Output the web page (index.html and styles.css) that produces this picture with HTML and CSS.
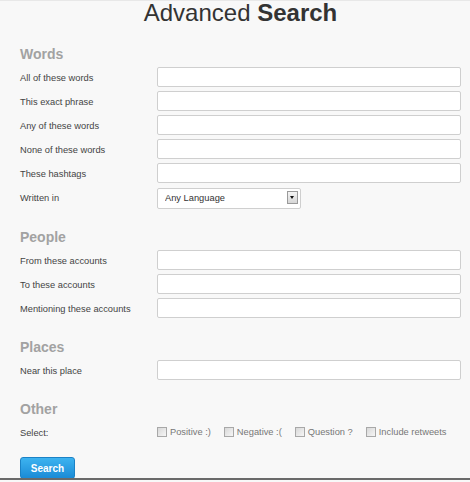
FILE: index.html
```html
<!DOCTYPE html>
<html lang="en">
<head>
    <meta charset="UTF-8">
    <meta name="viewport" content="width=device-width, initial-scale=1.0">
    <title>Advanced Search</title>
    <link rel="stylesheet" href="styles.css">
</head>
<body>
    <div class="page">
        <h1 class="title">Advanced <b>Search</b></h1>

        <section class="group">
            <h2>Words</h2>
            <div class="fields">
                <div class="row"><label>All of these words</label><input type="text"></div>
                <div class="row"><label>This exact phrase</label><input type="text"></div>
                <div class="row"><label>Any of these words</label><input type="text"></div>
                <div class="row"><label>None of these words</label><input type="text"></div>
                <div class="row"><label>These hashtags</label><input type="text"></div>
                <div class="row">
                    <label>Written in</label>
                    <div class="select">
                        <select><option>Any Language</option></select>
                        <span class="arrow"></span>
                    </div>
                </div>
            </div>
        </section>

        <section class="group">
            <h2>People</h2>
            <div class="fields">
                <div class="row"><label>From these accounts</label><input type="text"></div>
                <div class="row"><label>To these accounts</label><input type="text"></div>
                <div class="row"><label>Mentioning these accounts</label><input type="text"></div>
            </div>
        </section>

        <section class="group">
            <h2>Places</h2>
            <div class="fields">
                <div class="row"><label>Near this place</label><input type="text"></div>
            </div>
        </section>

        <section class="group">
            <h2>Other</h2>
            <div class="fields">
                <div class="row">
                    <label>Select:</label>
                    <div class="checks">
                        <label class="check"><input type="checkbox">Positive :)</label>
                        <label class="check"><input type="checkbox">Negative :(</label>
                        <label class="check"><input type="checkbox">Question ?</label>
                        <label class="check"><input type="checkbox">Include retweets</label>
                    </div>
                </div>
            </div>
        </section>

        <button class="search-btn">Search</button>
    </div>
</body>
</html>
```

FILE: styles.css
```css
body {
    margin: 0;
    padding: 0;
    font-family: 'Liberation Sans', Arial, sans-serif;
    background: #f8f8f8;
}
.page {
    height: 480px;
    box-sizing: border-box;
    padding: 0 9px 0 20px;
    background: #f8f8f8;
    border-top: 1px solid #e8e8e8;
    border-bottom: 2px solid #6a6a6a;
    overflow: hidden;
}
.title {
    margin: 0 0 20px;
    font-size: 24px;
    line-height: 24px;
    font-weight: normal;
    color: #333;
    text-align: center;
}
.group {
    margin-bottom: 20px;
}
.group h2 {
    margin: 0 0 4px;
    font-size: 14px;
    line-height: 18px;
    color: #a2a2a2;
}
.fields {
    display: grid;
    gap: 4px;
}
.row {
    display: grid;
    grid-template-columns: 137px 1fr;
    align-items: center;
    min-height: 20px;
}
.row > label {
    padding-top: 1px;
    font-size: 9.3px;
    color: #444;
}
.row input[type="text"] {
    height: 20px;
    box-sizing: border-box;
    border: 1px solid #cfcfcf;
    border-radius: 2px;
    background: #fff;
    margin: 0;
}
.select {
    position: relative;
    width: 144px;
    height: 21px;
}
.select select {
    appearance: none;
    width: 100%;
    height: 100%;
    box-sizing: border-box;
    border: 1px solid #cfcfcf;
    border-radius: 2px;
    background: #fff;
    padding: 0 0 0 7px;
    font-family: inherit;
    font-size: 9.3px;
    color: #333;
}
.arrow {
    position: absolute;
    right: 3px;
    top: 4px;
    width: 11px;
    height: 13px;
    box-sizing: border-box;
    border: 1px solid #9a9a9a;
    background: linear-gradient(#f4f4f4, #d6d6d6);
}
.arrow::after {
    content: '';
    position: absolute;
    left: 2px;
    top: 4px;
    border-left: 2.5px solid transparent;
    border-right: 2.5px solid transparent;
    border-top: 3px solid #111;
}
.checks {
    display: flex;
    align-items: center;
    gap: 13px;
}
.check {
    display: flex;
    align-items: center;
    gap: 3px;
    font-size: 9.3px;
    color: #777;
}
.check input {
    appearance: none;
    width: 10px;
    height: 10px;
    margin: 0;
    border: 1px solid #a8a8a8;
    background: linear-gradient(135deg, #d8d8d8, #f6f6f6);
}
.search-btn {
    display: block;
    margin-top: -5px;
    width: 55px;
    height: 22px;
    border: 1px solid #1b82c6;
    border-radius: 3px;
    background: linear-gradient(#3db3f0, #1b8bd6);
    color: #fff;
    font-family: inherit;
    font-size: 10px;
    font-weight: bold;
    cursor: pointer;
}
```
